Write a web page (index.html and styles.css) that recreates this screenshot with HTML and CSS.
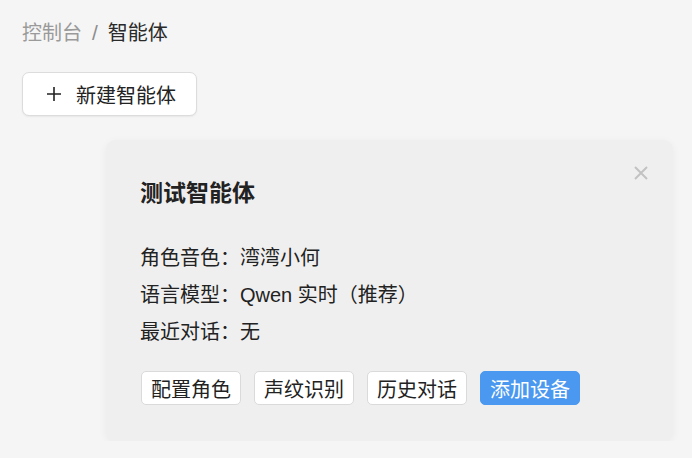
FILE: index.html
```html
<!DOCTYPE html>
<html lang="zh">
<head>
<meta charset="utf-8">
<link rel="stylesheet" href="styles.css">
</head>
<body>
<nav class="crumbs">
  <span class="crumb-muted">控制台</span>
  <span class="crumb-sep">/</span>
  <span class="crumb-current">智能体</span>
</nav>
<div class="toolbar">
  <button class="btn-new"><svg class="plus" viewBox="0 0 16 16" width="16" height="16"><path d="M8 1v14M1 8h14" stroke="#222" stroke-width="1.6" fill="none"/></svg><span>新建智能体</span></button>
</div>
<section class="card">
  <svg class="close" viewBox="0 0 14 14" width="14" height="14"><path d="M1 1l12 12M13 1L1 13" stroke="#c2c2c2" stroke-width="2" fill="none"/></svg>
  <h2 class="card-title">测试智能体</h2>
  <div class="info">
    <div class="row">角色音色：湾湾小何</div>
    <div class="row">语言模型：Qwen 实时（推荐）</div>
    <div class="row">最近对话：无</div>
  </div>
  <div class="actions">
    <button class="btn">配置角色</button>
    <button class="btn">声纹识别</button>
    <button class="btn">历史对话</button>
    <button class="btn primary">添加设备</button>
  </div>
</section>
</body>
</html>
```
FILE: styles.css
```css
html, body {
  margin: 0;
  background: #f5f5f5;
}
body {
  padding: 21px 22px 0 22px;
  font-family: "Liberation Sans", "Noto Sans CJK SC", sans-serif;
  color: #222;
}
.crumbs {
  display: flex;
  align-items: center;
  gap: 10px;
  font-size: 20px;
  line-height: 24px;
}
.crumb-muted { color: #9a9a9a; }
.crumb-sep { color: #8e8e8e; font-size: 21px; }
.crumb-current { color: #2a2a2a; }
.toolbar {
  margin-top: 27px;
}
.btn-new {
  display: flex;
  align-items: center;
  gap: 14px;
  height: 44px;
  width: 175px;
  padding: 0 0 0 23px;
  background: #fff;
  border: 1px solid #dcdcdc;
  border-radius: 7px;
  box-shadow: 0 1px 2px rgba(0,0,0,0.06);
  font-family: inherit;
  font-size: 20px;
  color: #222;
}
.card {
  position: relative;
  margin: 24px 0 0 84px;
  width: 567px;
  box-sizing: border-box;
  padding: 38px 0 36px 34px;
  background: #efefef;
  border-radius: 10px;
  box-shadow: 0 2px 8px rgba(0,0,0,0.05);
}
.close {
  position: absolute;
  top: 26px;
  right: 25px;
}
.card-title {
  margin: 0;
  font-size: 23px;
  line-height: 30px;
  font-weight: bold;
  color: #222;
}
.info {
  margin-top: 32px;
  font-size: 20px;
  line-height: 37px;
  color: #222;
}
.actions {
  display: flex;
  gap: 13px;
  margin-top: 20px;
  padding-left: 1px;
}
.btn {
  height: 34px;
  width: 100px;
  padding: 0;
  background: #fff;
  border: 1px solid #dadada;
  border-radius: 5px;
  font-family: inherit;
  font-size: 20px;
  color: #222;
}
.btn.primary {
  background: #4a98f0;
  border-color: #4a98f0;
  color: #fff;
}
```
